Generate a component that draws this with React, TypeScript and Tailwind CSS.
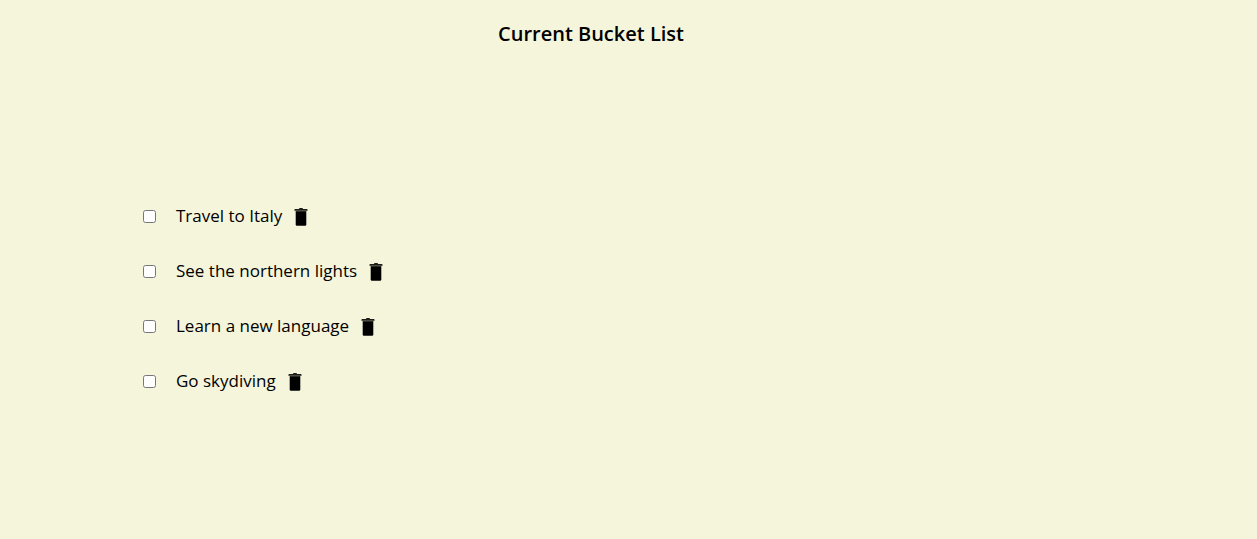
import { useState } from 'react';

const initialItems = [
  'Travel to Italy',
  'See the northern lights',
  'Learn a new language',
  'Go skydiving',
];

function TrashIcon() {
  return (
    <svg viewBox="0 0 14 18" className="h-[18px] w-[14px]" aria-hidden="true">
      <path
        fill="#1c1c18"
        d="M1.3 1H4.8Q5.2 0 6 0H8Q8.8 0 9.2 1H12.7Q13.6 1 13.6 2.2V2.8H.4V2.2Q.4 1 1.3 1Z"
      />
      <path fill="#39392f" d="M1.7 2.8H12.3V4H1.7Z" />
      <path fill="#000" d="M1.7 3.8H12.3V16.6Q12.3 17.8 11.1 17.8H2.9Q1.7 17.8 1.7 16.6Z" />
    </svg>
  );
}

export default function App() {
  const [items, setItems] = useState(initialItems);

  return (
    <main className="min-h-screen bg-[#f5f5dc] pl-[143px] pt-5 font-['Open_Sans','Noto_Sans',sans-serif] text-black">
      <h1 className="mr-[218px] text-center text-xl leading-7 font-semibold">Current Bucket List</h1>
      <ul className="mt-[154px] flex flex-col gap-[27px]">
        {items.map((item) => (
          <li key={item} className="flex h-7 items-center">
            <label className="flex items-center gap-5 text-[17px] leading-7">
              <input type="checkbox" className="size-[13px]" />
              <span>{item}</span>
            </label>
            <button
              type="button"
              aria-label={`Delete ${item}`}
              className="ml-3 pt-0.5"
              onClick={() => setItems(items.filter((other) => other !== item))}
            >
              <TrashIcon />
            </button>
          </li>
        ))}
      </ul>
    </main>
  );
}
